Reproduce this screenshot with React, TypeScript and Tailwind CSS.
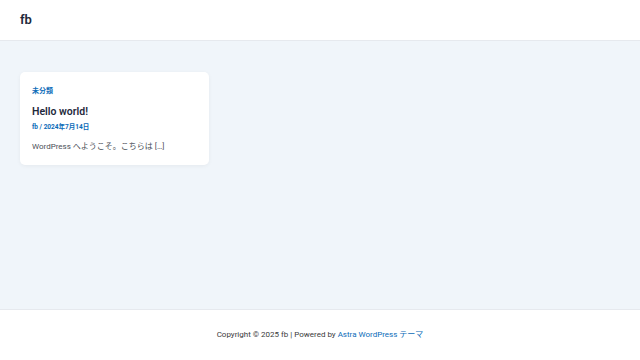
export default function App() {
  return (
    <div
      className="flex h-[360px] w-[640px] flex-col bg-[#f0f5fa] text-[#3a3a3a]"
      style={{ fontFamily: 'Roboto, "Noto Sans CJK JP", sans-serif' }}
    >
      <header className="flex h-[41px] items-center border-b border-[#e6e9ee] bg-white px-5">
        <span className="text-[13px] font-semibold text-[#1e293b]">fb</span>
      </header>

      <main className="flex-1 px-5 pt-[31px]">
        <article className="w-[189px] rounded-[5px] bg-white px-3 pb-3 pt-[14px] shadow-[0_1px_4px_rgba(0,0,0,0.05)]">
          <div className="text-[7px] font-bold leading-[10px] text-[#0b6bb8]">未分類</div>
          <h2 className="mt-[9px] text-[10.5px] font-semibold leading-[14px] text-[#1e293b]">Hello world!</h2>
          <div className="mt-[4px] text-[6.5px] font-bold leading-[9px] text-[#0b6bb8]">fb / 2024年7月14日</div>
          <p className="mt-[9px] text-[8px] leading-[12px] text-[#4b4f58]">WordPress へようこそ。こちらは […]</p>
        </article>
      </main>

      <footer className="flex h-[51px] items-center justify-center border-t border-[#e6e9ee] bg-white">
        <p className="text-[8px] text-[#3a3a3a]">
          Copyright © 2025 fb | Powered by <span className="text-[#0b6bb8]">Astra WordPress テーマ</span>
        </p>
      </footer>
    </div>
  )
}
